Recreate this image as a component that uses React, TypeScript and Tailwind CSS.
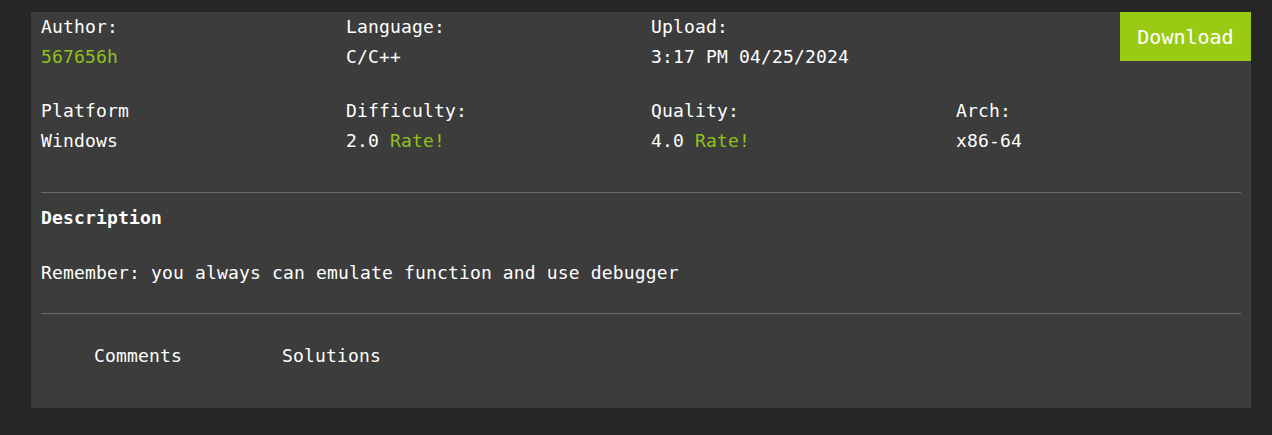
import React from "react";

const meta = [
  { label: "Author:", value: "567656h", green: true },
  { label: "Language:", value: "C/C++" },
  { label: "Upload:", value: "3:17 PM 04/25/2024" },
  null,
  { label: "Platform", value: "Windows" },
  { label: "Difficulty:", value: "2.0", rate: true },
  { label: "Quality:", value: "4.0", rate: true },
  { label: "Arch:", value: "x86-64" },
];

const App: React.FC = () => {
  return (
    <div className="w-full min-h-screen bg-[#262626] pt-3 pl-[31px] pr-[21px] text-white font-['DejaVu_Sans_Mono',monospace] text-[18px] leading-[30px] tracking-[0.16px]">
      <div className="relative bg-[#3c3c3c] h-[396px]">
        {/* Download button */}
        <button className="absolute top-0 right-0 w-[131px] h-[49px] bg-[#9acb14] text-white text-[20px] tracking-normal font-['DejaVu_Sans_Mono',monospace]">
          Download
        </button>

        {/* Meta grid */}
        <div className="grid grid-cols-4 gap-y-6">
          {meta.map((m, i) =>
            m ? (
              <div key={i} className="pl-[10px]">
                <div>{m.label}</div>
                <div className={m.green ? "text-[#8ec21b]" : ""}>
                  {m.value}
                  {m.rate && <span className="text-[#8ec21b]"> Rate!</span>}
                </div>
              </div>
            ) : (
              <div key={i} />
            )
          )}
        </div>

        <div className="mx-[10px] mt-9 border-t border-[#6a6a6a]" />

        {/* Description */}
        <div className="px-[10px] mt-[10px]">
          <div className="font-bold">Description</div>
          <p className="mt-[25px]">Remember: you always can emulate function and use debugger</p>
        </div>

        <div className="mx-[10px] mt-[25px] border-t border-[#6a6a6a]" />

        {/* Tabs */}
        <div className="flex gap-[100px] pl-[63px] mt-[27px]">
          <span>Comments</span>
          <span>Solutions</span>
        </div>
      </div>
    </div>
  );
};

export default App;
